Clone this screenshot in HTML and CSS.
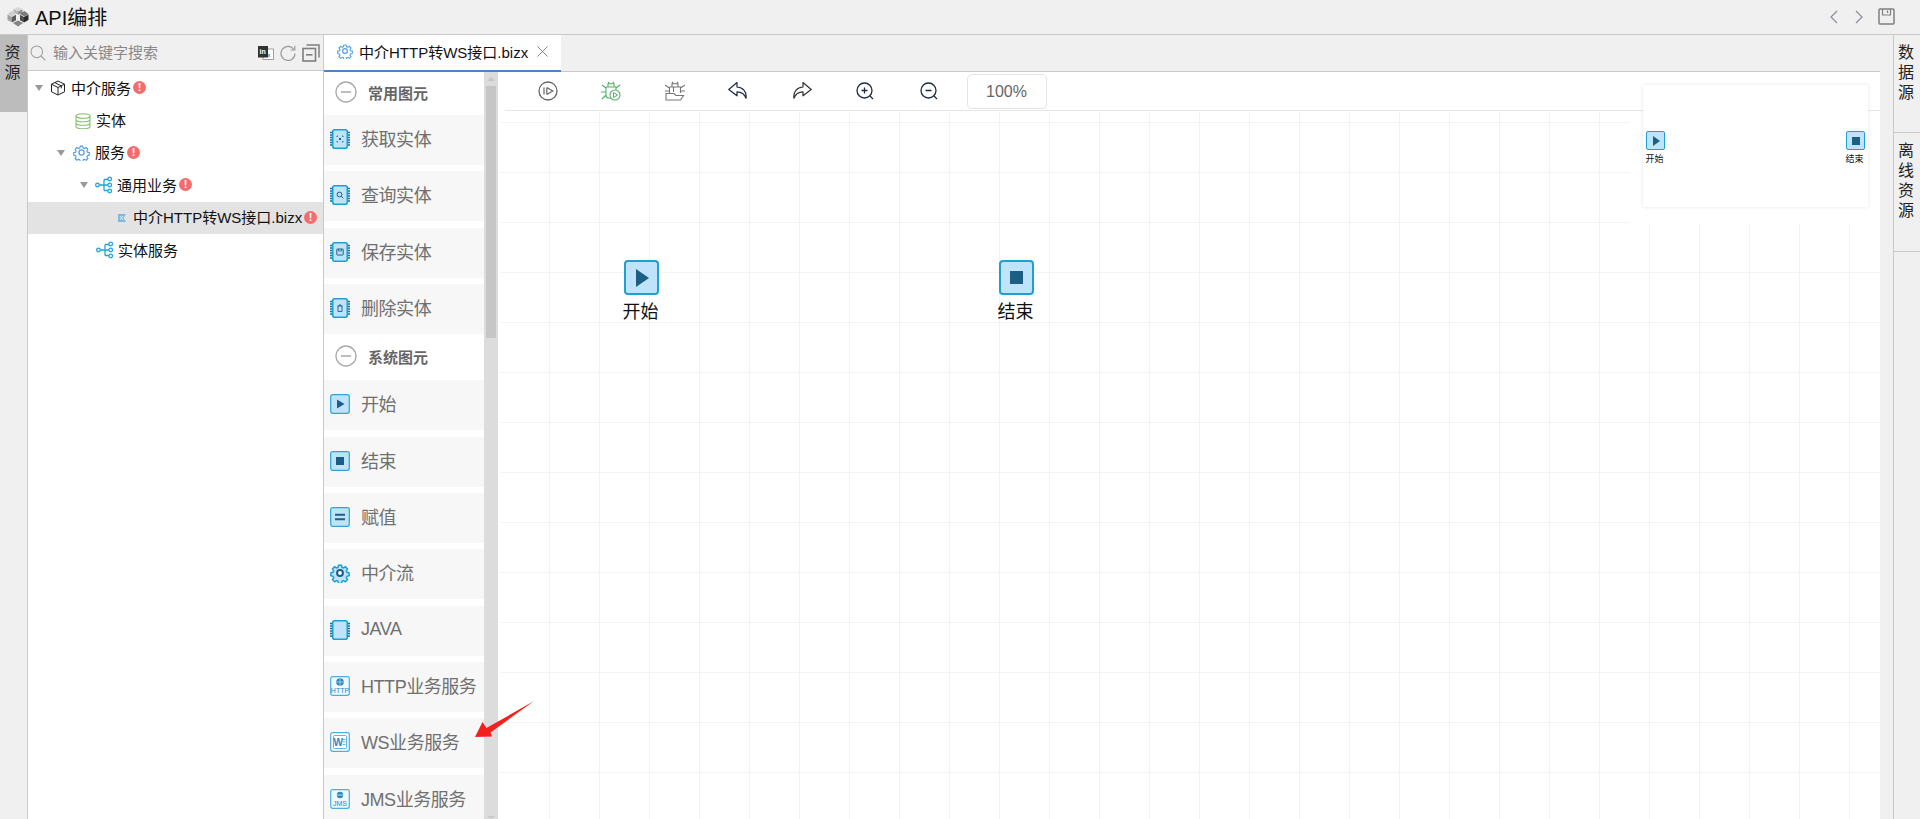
FILE: index.html
```html
<!DOCTYPE html>
<html lang="zh">
<head>
<meta charset="utf-8">
<title>API编排</title>
<link rel="stylesheet" href="styles.css">
</head>
<body>
<svg class="defs" width="0" height="0" aria-hidden="true">
  <defs>
    <symbol id="chip" viewBox="0 0 20 20">
      <path d="M0 3.500h3M0 6h3M0 8.500h3M0 11h3M0 13.500h3M0 16h3M17 3.500h3M17 6h3M17 8.500h3M17 11h3M17 13.500h3M17 16h3" stroke="#1b6f96" stroke-width="1.300" fill="none"/>
      <rect x="2.700" y=".8" width="14.600" height="18.400" rx="2" fill="#bfe3fa" stroke="#1aa0d2" stroke-width="1.600"/>
    </symbol>
    <symbol id="gear" viewBox="0 0 24 24">
      <path d="M10 2h4l.7 3 1.800.8 2.700-1.600 2.800 2.800-1.600 2.700.8 1.800 3 .7v4l-3 .7-.8 1.800 1.600 2.700-2.800 2.800-2.700-1.600-1.800.8-.7 3h-4l-.7-3-1.800-.8-2.700 1.600-2.800-2.800 1.600-2.700-.8-1.800-3-.7v-4l3-.7.8-1.800-1.600-2.700 2.800-2.800 2.700 1.600 1.800-.8z" transform="translate(1.200 1.200) scale(.9)" fill="none" stroke="currentColor" stroke-width="1.800" stroke-linejoin="round"/>
      <circle cx="12" cy="12" r="3.600" fill="none" stroke="currentColor" stroke-width="1.800"/>
    </symbol>
    <symbol id="flow" viewBox="0 0 18 18">
      <path d="M4 9h5M9 3.500v11M9 3.500h4M9 9h4M9 14.500h4" fill="none" stroke="#1fa5d8" stroke-width="1.300"/>
      <circle cx="2.500" cy="9" r="1.800" fill="#fff" stroke="#1fa5d8" stroke-width="1.300"/>
      <circle cx="14.700" cy="3" r="1.800" fill="#fff" stroke="#1fa5d8" stroke-width="1.300"/>
      <circle cx="14.700" cy="9" r="1.800" fill="#fff" stroke="#1fa5d8" stroke-width="1.300"/>
      <circle cx="14.700" cy="15" r="1.800" fill="#fff" stroke="#1fa5d8" stroke-width="1.300"/>
    </symbol>
    <symbol id="minus-circle" viewBox="0 0 22 22">
      <circle cx="11" cy="11" r="10" fill="#fff" stroke="#a8a8a8" stroke-width="1.300"/>
      <path d="M6 11h10" stroke="#a8a8a8" stroke-width="1.500"/>
    </symbol>
  </defs>
</svg>

<header class="topbar">
  <svg class="logo" viewBox="0 0 22 20">
    <path d="M11 0l4.500 2.300L11 4.600 6.500 2.300z" fill="#d8d8d8"/>
    <path d="M6.500 2.300L11 4.600v3.200L6.500 5.500z" fill="#b4b4b4"/>
    <path d="M15.500 2.300L11 4.600v3.200l4.500-2.300z" fill="#8f8f8f"/>
    <path d="M3.500 4l5 2.800L3.500 9.500-.5 7z" transform="translate(1 0)" fill="#cfcfcf"/>
    <path d="M18.500 4l4 3-4 2.500-5-2.700z" transform="translate(-1 0)" fill="#7a7a7a"/>
    <path d="M.5 7.500l4.500 2.500v5.500L.5 13z" fill="#a0a0a0"/>
    <path d="M5 10l4-2.200v5.500L5 15.500z" fill="#5c5c5c"/>
    <path d="M21.500 7.500L17 10v5.500l4.500-2.500z" fill="#2a2a2a"/>
    <path d="M13 7.800l4 2.200v5.500l-4-2.200z" fill="#4c4c4c"/>
    <path d="M6 16l5-2.500 5 2.500-5 3.600z" fill="#858585"/>
  </svg>
  <h1 class="title">API编排</h1>
  <div class="top-actions">
    <svg class="nav-icon" viewBox="0 0 10 14"><path d="M8 1L2 7l6 6" fill="none" stroke="#8a9099" stroke-width="1.200"/></svg>
    <svg class="nav-icon" viewBox="0 0 10 14"><path d="M2 1l6 6-6 6" fill="none" stroke="#8a9099" stroke-width="1.200"/></svg>
    <svg class="save-icon" viewBox="0 0 17 17"><path d="M1 2a1 1 0 0 1 1-1h13a1 1 0 0 1 1 1v13a1 1 0 0 1-1 1H2a1 1 0 0 1-1-1z" fill="none" stroke="#7f7f7f" stroke-width="1.500"/><path d="M4.500 1v6h8V1" fill="none" stroke="#7f7f7f" stroke-width="1.200"/><path d="M9.500 2.500v2.500" stroke="#7f7f7f" stroke-width="1.300"/></svg>
  </div>
</header>

<main class="workspace">
  <nav class="rail rail-left">
    <div class="rail-tab rail-tab-active">资<br>源</div>
  </nav>

  <aside class="resources">
    <div class="search">
      <svg class="search-icon" viewBox="0 0 16 16"><circle cx="6.800" cy="6.800" r="5.800" fill="none" stroke="#a0a0a0" stroke-width="1.100"/><path d="M11 11l4.300 4.300" stroke="#a0a0a0" stroke-width="1.100"/></svg>
      <span class="search-text">输入关键字搜索</span>
      <div class="search-actions">
        <svg class="tool-in" viewBox="0 0 16 16"><rect x="5" y="4" width="10.500" height="10.500" fill="#fff" stroke="#888" stroke-width=".8"/><rect x="0" y="1" width="10" height="11.500" fill="#333"/><text x="1.500" y="9" class="tool-in-text">in</text><text x="9.500" y="12" class="tool-in-text-dark">x</text></svg>
        <svg class="tool-refresh" viewBox="0 0 16 16"><path d="M13.800 4.500A7 7 0 1 0 15 8.500" fill="none" stroke="#999" stroke-width="1.200"/><path d="M14.800 .8v4.200h-4.200" fill="none" stroke="#999" stroke-width="1.200"/></svg>
        <svg class="tool-collapse" viewBox="0 0 18 18"><rect x="1" y="4.500" width="12.500" height="12.500" fill="none" stroke="#7f7f7f" stroke-width="1.600"/><path d="M4.500 1h12.500v12.500" fill="none" stroke="#7f7f7f" stroke-width="1.500"/><path d="M4 10.800h6.500" stroke="#7f7f7f" stroke-width="1.600"/></svg>
      </div>
    </div>
    <ul class="tree">
      <li class="row pad-0">
        <i class="caret"></i>
        <svg class="row-icon" viewBox="0 0 16 16"><path d="M8 1l6.500 3.200v7.600L8 15l-6.500-3.200V4.200zM1.500 4.200L8 7.500l6.500-3.300M8 7.500V15M4.800 2.600l6.500 3.300v2.500" fill="none" stroke="#222" stroke-width="1" stroke-linejoin="round"/></svg>
        <span class="row-text">中介服务</span><b class="badge">!</b>
      </li>
      <li class="row pad-1-leaf">
        <svg class="row-icon" viewBox="0 0 16 16"><ellipse cx="8" cy="3" rx="7" ry="2.300" fill="none" stroke="#85bf6d" stroke-width="1.100"/><path d="M1 3v10.500C1 14.800 4 15.800 8 15.800s7-1 7-2.300V3M1 6.500c0 1.300 3 2.300 7 2.300s7-1 7-2.300M1 10c0 1.300 3 2.300 7 2.300s7-1 7-2.300" fill="none" stroke="#85bf6d" stroke-width="1.100"/></svg>
        <span class="row-text">实体</span>
      </li>
      <li class="row pad-1">
        <i class="caret"></i>
        <svg class="row-icon-gear gear-blue"><use href="#gear"/></svg>
        <span class="row-text">服务</span><b class="badge">!</b>
      </li>
      <li class="row pad-2">
        <i class="caret"></i>
        <svg class="row-icon-wide"><use href="#flow"/></svg>
        <span class="row-text">通用业务</span><b class="badge">!</b>
      </li>
      <li class="row pad-3 row-selected">
        <svg class="file-icon" viewBox="0 0 8 8"><path d="M0 0h8L5.500 4 8 8H0z" fill="#7fb7e0"/><path d="M2 2l3 4M5 2L2 6" stroke="#fff" stroke-width=".7"/></svg>
        <span class="row-text">中介HTTP转WS接口.bizx</span><b class="badge">!</b>
      </li>
      <li class="row pad-2-leaf">
        <svg class="row-icon-wide"><use href="#flow"/></svg>
        <span class="row-text">实体服务</span>
      </li>
    </ul>
  </aside>

  <section class="editor">
    <div class="tabs">
      <div class="tab">
        <svg class="tab-icon gear-light"><use href="#gear"/></svg>
        <span class="tab-text">中介HTTP转WS接口.bizx</span>
        <svg class="tab-close" viewBox="0 0 11 11"><path d="M.5.500l10 10M10.500.500l-10 10" stroke="#777" stroke-width=".9"/></svg>
      </div>
    </div>
    <div class="editor-body">
      <div class="palette">
        <div class="palette-list">
          <div class="group group-first"><svg class="group-icon"><use href="#minus-circle"/></svg><span class="group-text">常用图元</span></div>
          <div class="item"><svg class="item-icon" viewBox="0 0 20 20"><use href="#chip"/><path d="M7 8V7h1M12 7h1v1M7 12v1h1M13 12v1h-1" fill="none" stroke="#1b5f83" stroke-width=".9"/><rect x="9" y="9" width="2" height="2" fill="#1b5f83"/></svg><span>获取实体</span></div>
          <div class="item"><svg class="item-icon" viewBox="0 0 20 20"><use href="#chip"/><circle cx="9.500" cy="9.500" r="2.400" fill="none" stroke="#1b5f83" stroke-width="1"/><path d="M11.300 11.300l2 2" stroke="#1b5f83" stroke-width="1"/></svg><span>查询实体</span></div>
          <div class="item"><svg class="item-icon" viewBox="0 0 20 20"><use href="#chip"/><rect x="6.800" y="7" width="6.400" height="6" rx=".6" fill="none" stroke="#1b5f83" stroke-width="1"/><path d="M8.500 7v2h3V7" fill="none" stroke="#1b5f83" stroke-width=".8"/></svg><span>保存实体</span></div>
          <div class="item"><svg class="item-icon" viewBox="0 0 20 20"><use href="#chip"/><path d="M7.500 8h5M9 8V7h2v1M8 8v5.500h4V8" fill="none" stroke="#1b5f83" stroke-width=".9"/></svg><span>删除实体</span></div>
          <div class="group"><svg class="group-icon"><use href="#minus-circle"/></svg><span class="group-text">系统图元</span></div>
          <div class="item"><svg class="item-icon" viewBox="0 0 20 20"><rect x=".7" y=".7" width="18.600" height="18.600" rx="2" fill="#bfe3fa" stroke="#2aa6d8" stroke-width="1.200"/><path d="M7 5.500L14.500 10 7 14.500z" fill="#1b5f83"/></svg><span>开始</span></div>
          <div class="item"><svg class="item-icon" viewBox="0 0 20 20"><rect x=".7" y=".7" width="18.600" height="18.600" rx="2" fill="#bfe3fa" stroke="#2aa6d8" stroke-width="1.200"/><rect x="6" y="6" width="8" height="8" fill="#1b5f83"/></svg><span>结束</span></div>
          <div class="item"><svg class="item-icon" viewBox="0 0 20 20"><rect x=".7" y=".7" width="18.600" height="18.600" rx="2" fill="#bfe3fa" stroke="#2aa6d8" stroke-width="1.200"/><path d="M5 6.800h10v2H5zM5 11.200h10v2H5z" fill="#1b5f83"/></svg><span>赋值</span></div>
          <div class="item"><svg class="item-icon" viewBox="0 0 24 24"><path d="M10 1.500h4l.7 3 1.800.8 2.700-1.600 2.800 2.800-1.600 2.700.8 1.800 3 .7v4l-3 .7-.8 1.800 1.600 2.700-2.800 2.800-2.700-1.600-1.800.8-.7 3h-4l-.7-3-1.800-.8-2.700 1.600-2.800-2.800 1.600-2.700-.8-1.800-3-.7v-4l3-.7.8-1.800-1.600-2.700 2.800-2.800 2.700 1.600 1.800-.8z" transform="translate(1.200 1.200) scale(.9)" fill="#bfe3fa" stroke="#1aa0d2" stroke-width="2"/><circle cx="12" cy="12" r="3.500" fill="#fff" stroke="#1b5f83" stroke-width="2.400"/></svg><span>中介流</span></div>
          <div class="item item-latin"><svg class="item-icon" viewBox="0 0 20 20"><use href="#chip"/></svg><span>JAVA</span></div>
          <div class="item"><svg class="item-icon" viewBox="0 0 20 20"><rect x=".7" y=".7" width="18.600" height="18.600" rx="2" fill="#eef8fe" stroke="#4aaee0" stroke-width="1.200"/><circle cx="10" cy="6" r="3.800" fill="#2e87bd"/><path d="M6.300 6h7.400M10 2.200v7.600" stroke="#d8eefc" stroke-width=".6"/><text x="10" y="16.500" class="svc-text">HTTP</text></svg><span>HTTP业务服务</span></div>
          <div class="item"><svg class="item-icon" viewBox="0 0 20 20"><rect x=".7" y=".7" width="18.600" height="18.600" rx="2" fill="#fff" stroke="#4aaee0" stroke-width="1.200"/><rect x="3.500" y="3.500" width="13" height="13" rx="1" fill="#fff" stroke="#4aaee0" stroke-width=".9"/><text x="8.300" y="13.500" class="svc-text-w">W</text><path d="M12.800 7.500h2.600M12.800 10h2.600M12.800 12.500h2.600" stroke="#4aaee0" stroke-width=".9"/></svg><span>WS业务服务</span></div>
          <div class="item"><svg class="item-icon" viewBox="0 0 20 20"><rect x=".7" y=".7" width="18.600" height="18.600" rx="2" fill="#eef8fe" stroke="#4aaee0" stroke-width="1.200"/><circle cx="10" cy="6" r="3.200" fill="#2e87bd"/><path d="M7 6h6" stroke="#d8eefc" stroke-width=".8"/><text x="10" y="16.500" class="svc-text">JMS</text></svg><span>JMS业务服务</span></div>
        </div>
        <div class="scrollbar">
          <i class="scroll-up"></i>
          <i class="scroll-thumb"></i>
          <i class="scroll-down"></i>
        </div>
      </div>

      <div class="canvas">
        <div class="toolbar">
          <button class="tool"><svg viewBox="0 0 20 20" class="tool-svg"><circle cx="10" cy="10" r="9" fill="none" stroke="#666" stroke-width="1.300"/><path d="M6 6.500v7M8.800 6.500v7M8.800 6.500l6 3.500-6 3.500" fill="none" stroke="#666" stroke-width="1.200"/></svg></button>
          <button class="tool"><svg viewBox="0 0 20 20" class="tool-svg"><path d="M7 .8l1.500 2h3L13 .8M5 6h10v3M5 6v8a3 3 0 0 0 3 3h2M1 4l4 3M19 4l-4 3M0 11h5M1 18l4-4M7 2.800h6V6H7z" fill="none" stroke="#54b06a" stroke-width="1.100"/><circle cx="14" cy="14" r="5" fill="#fff" stroke="#54b06a" stroke-width="1.100"/><path d="M12.500 11.500l4 2.500-4 2.500z" fill="none" stroke="#54b06a" stroke-width="1"/></svg></button>
          <button class="tool"><svg viewBox="0 0 20 20" class="tool-svg"><path d="M7 .8l1.500 2h3L13 .8M4.500 6h11v6M4.500 6v6M0 4l4.500 3M20 4l-4.500 3M0 10h4.500M20 10h-4.500M7 2.800h6V6H7zM8.500 6v5" fill="none" stroke="#777" stroke-width="1.100"/><path d="M1 12.500h8l2 2h7.500l-3 4.500H1z" fill="#fff" stroke="#777" stroke-width="1.100"/></svg></button>
          <button class="tool"><svg viewBox="0 0 20 20" class="tool-svg"><path d="M9 1.500L.8 8.500l8.200 6.300v-4c4.500 0 7.500 2 9 6.500 1-6.500-3-11-9-11.300z" fill="none" stroke="#1e2a44" stroke-width="1.200" stroke-linejoin="round"/></svg></button>
          <button class="tool"><svg viewBox="0 0 20 20" class="tool-svg"><path d="M11 1.500l8.200 7-8.200 6.300v-4c-4.500 0-7.500 2-9 6.500-1-6.500 3-11 9-11.300z" fill="none" stroke="#333" stroke-width="1.200" stroke-linejoin="round"/></svg></button>
          <button class="tool"><svg viewBox="0 0 20 20" class="tool-svg"><circle cx="9.500" cy="9.500" r="7.500" fill="none" stroke="#1e2a44" stroke-width="1.300"/><path d="M15 15l3 3M6.500 9.500h6M9.500 6.500v6" fill="none" stroke="#1e2a44" stroke-width="1.300"/></svg></button>
          <button class="tool"><svg viewBox="0 0 20 20" class="tool-svg"><circle cx="9.500" cy="9.500" r="7.500" fill="none" stroke="#1e2a44" stroke-width="1.300"/><path d="M15 15l3 3M6.500 9.500h6" fill="none" stroke="#1e2a44" stroke-width="1.300"/></svg></button>
          <div class="zoom-box">100%</div>
        </div>
        <div class="stage">
          <div class="node node-start">
            <div class="node-box"><i class="glyph-play"></i></div>
            <span class="node-label">开始</span>
          </div>
          <div class="node node-end">
            <div class="node-box"><i class="glyph-stop"></i></div>
            <span class="node-label">结束</span>
          </div>
        </div>
        <div class="overview-mask"></div>
        <div class="overview">
          <div class="mini mini-start"><div class="mini-box"><i class="mini-play"></i></div><span class="mini-label">开始</span></div>
          <div class="mini mini-end"><div class="mini-box"><i class="mini-stop"></i></div><span class="mini-label">结束</span></div>
        </div>
      </div>
    </div>
  </section>

  <div class="gutter"></div>

  <nav class="rail rail-right">
    <div class="rail-tab rail-tab-data">数<br>据<br>源</div>
    <div class="rail-tab rail-tab-offline">离<br>线<br>资<br>源</div>
  </nav>

  <svg class="annotation" viewBox="0 0 62 38"><path d="M1 37L8.500 22l4 6L60 1 16.500 32.500 18 36.500z" fill="#f4201c"/></svg>
</main>
</body>
</html>
```
FILE: styles.css
```css
* { box-sizing: border-box; }
html, body { margin: 0; height: 819px; overflow: hidden; }
body {
  font-family: "Liberation Sans", "Noto Sans CJK SC", sans-serif;
  background: #f0f0f0;
  color: #111;
  display: flex;
  flex-direction: column;
}
.defs { position: absolute; }
i { display: block; }

.topbar {
  height: 35px;
  flex: none;
  display: flex;
  align-items: center;
  padding: 0 25px 1px 7px;
  border-bottom: 1px solid #c9c9c9;
}
.logo { width: 22px; height: 20px; }
.title { margin: 0 0 0 6px; font-size: 20px; font-weight: 400; color: #111; }
.top-actions { margin-left: auto; display: flex; align-items: center; gap: 15px; }
.nav-icon { width: 10px; height: 14px; }
.save-icon { width: 17px; height: 17px; margin-left: -1px; }

.workspace { flex: 1; display: flex; min-height: 0; position: relative; }

.rail { flex: none; background: #f0f0f0; }
.rail-left { width: 28px; border-right: 1px solid #c9c9c9; }
.rail-right { width: 27px; border-left: 1px solid #c9c9c9; }
.rail-tab { font-size: 16px; line-height: 20px; text-align: center; color: #222; }
.rail-tab-active { height: 77px; width: 27px; background: #bcbcbc; padding: 8px 2px 0 0; }
.rail-tab-data { height: 98px; padding: 8px 2px 0 0; border-bottom: 1px solid #c9c9c9; }
.rail-tab-offline { height: 119px; padding: 8px 2px 0 0; border-bottom: 1px solid #c9c9c9; }

.resources { width: 296px; flex: none; background: #fff; border-right: 1px solid #c9c9c9; }
.search {
  height: 36px;
  display: flex;
  align-items: center;
  padding-left: 2px;
  background: #f0f0f0;
  border-bottom: 1px solid #c9c9c9;
}
.search-icon { width: 16px; height: 16px; }
.search-text { margin: 0 0 2px 7px; font-size: 15px; color: #888; }
.search-actions { margin-left: auto; display: flex; align-items: center; gap: 6px; padding-right: 3px; }
.tool-in { width: 16px; height: 16px; }
.tool-in-text { font: bold 7px "Liberation Sans", sans-serif; fill: #fff; }
.tool-in-text-dark { font: 6px "Liberation Sans", sans-serif; fill: #333; }
.tool-refresh { width: 16px; height: 16px; }
.tool-collapse { width: 18px; height: 18px; }

.tree { list-style: none; margin: 0; padding: 1px 0 0; }
.row { height: 32.4px; display: flex; align-items: center; font-size: 15px; color: #111; }
.row-text { margin-bottom: 2px; white-space: nowrap; }
.row-selected { background: #e3e3e3; }
.pad-0 { padding-left: 7px; }
.pad-1 { padding-left: 29px; }
.pad-1-leaf { padding-left: 47px; }
.pad-2 { padding-left: 52px; }
.pad-2-leaf { padding-left: 68px; }
.pad-3 { padding-left: 90px; }
.caret {
  width: 0; height: 0;
  margin-right: 7px;
  border-left: 4.500px solid transparent;
  border-right: 4.500px solid transparent;
  border-top: 6px solid #999;
}
.row-icon { width: 16px; height: 16px; margin-right: 5px; }
.row-icon-gear { width: 17px; height: 17px; margin: 0 5px 0 1px; }
.row-icon-wide { width: 18px; height: 18px; margin-right: 4px; }
.gear-blue { color: #4d9fe8; }
.gear-light { color: #4d9fe8; }
.file-icon { width: 8px; height: 8px; margin-right: 7px; }
.badge {
  width: 13px; height: 13px;
  margin: 0 0 1px 2px;
  border-radius: 50%;
  background: #f56c6c;
  color: #fff;
  font-size: 11px;
  line-height: 13px;
  text-align: center;
}

.editor { flex: 1; min-width: 0; display: flex; flex-direction: column; }
.tabs { height: 37px; flex: none; border-bottom: 1px solid #c9c9c9; display: flex; }
.tab {
  width: 237px;
  height: 37px;
  display: flex;
  align-items: center;
  padding: 0 0 3px 13px;
  background: #fff;
  border-bottom: 2px solid #4a86cc;
}
.tab-icon { width: 16px; height: 16px; }
.tab-text { margin-left: 6px; font-size: 15px; color: #111; white-space: nowrap; }
.tab-close { width: 11px; height: 11px; margin-left: 9px; }

.editor-body { flex: 1; min-height: 0; display: flex; background: #fff; }
.palette { width: 174px; flex: none; display: flex; overflow: hidden; }
.palette-list { width: 160px; flex: none; background: #fff; }
.group { height: 40px; display: flex; align-items: center; padding: 0 0 8px 11px; }
.group-first { height: 43px; padding-bottom: 3px; }
.group-icon { width: 22px; height: 22px; }
.group-text { margin-left: 11px; font-size: 15px; font-weight: 700; color: #666; }
.item {
  height: 50px;
  margin-bottom: 6.330px;
  display: flex;
  align-items: center;
  padding: 0 0 2px 6px;
  background: #f7f7f7;
  font-size: 18px;
  letter-spacing: -.45px;
  color: #707070;
  white-space: nowrap;
}
.item span { margin-bottom: 2px; }
.item-latin span { margin-bottom: 0; }
.item-icon { width: 20px; height: 20px; margin-right: 11px; flex: none; }
.svc-text { font: 7px "Liberation Sans", sans-serif; fill: #2e87bd; text-anchor: middle; letter-spacing: 0; }
.svc-text-w { font: bold 10px "Liberation Sans", sans-serif; fill: #2e87bd; text-anchor: middle; letter-spacing: 0; }

.scrollbar { width: 14px; flex: none; background: #dcdcdc; position: relative; }
.scroll-up {
  position: absolute; top: 5px; left: 3px;
  width: 0; height: 0;
  border-left: 4px solid transparent;
  border-right: 4px solid transparent;
  border-bottom: 4px solid #c8c8c8;
}
.scroll-down {
  position: absolute; bottom: 0; left: 3px;
  width: 0; height: 0;
  border-left: 4px solid transparent;
  border-right: 4px solid transparent;
  border-top: 3px solid #c8c8c8;
}
.scroll-thumb { position: absolute; top: 14px; left: 2px; width: 10px; height: 252px; background: #c6c6c6; }

.canvas { flex: 1; min-width: 0; margin-left: 2px; display: flex; flex-direction: column; position: relative; }
.toolbar {
  height: 39px;
  flex: none;
  margin-left: 5px;
  display: flex;
  align-items: center;
  padding: 0 0 0 11px;
  border-bottom: 1px solid #e6e6e6;
}
.tool {
  width: 63.500px;
  height: 24px;
  padding: 0;
  border: 0;
  background: none;
  display: flex;
  align-items: center;
  justify-content: center;
}
.tool-svg { width: 20px; height: 20px; }
.zoom-box {
  width: 80px;
  height: 35px;
  margin-left: 6px;
  border: 1px solid #e4e4e4;
  border-radius: 5px;
  font-size: 16px;
  line-height: 33px;
  text-align: center;
  color: #666;
}
.stage {
  flex: 1;
  position: relative;
  overflow: hidden;
  background-color: #fff;
  background-image:
    linear-gradient(to right, transparent 49px, #f3f3f3 49px),
    linear-gradient(to bottom, transparent 49px, #f3f3f3 49px);
  background-size: 50px 50px;
  background-position: 0 0, 0 -38px;
}
.node { position: absolute; width: 35px; display: flex; flex-direction: column; align-items: center; }
.node-start { left: 124px; top: 149px; }
.node-end { left: 499px; top: 149px; }
.node-box {
  width: 35px; height: 35px;
  border: 2px solid #1ea0d0;
  border-radius: 4px;
  background: #bfe3fa;
  display: flex;
  align-items: center;
  justify-content: center;
}
.node-label { margin: 5px 2px 0 0; font-size: 18px; line-height: 24px; color: #111; white-space: nowrap; }
.glyph-play {
  width: 0; height: 0;
  margin-left: 2px;
  border-top: 9px solid transparent;
  border-bottom: 9px solid transparent;
  border-left: 13px solid #1b5f83;
}
.glyph-stop { width: 13px; height: 13px; background: #1b5f83; }

.overview-mask {
  position: absolute;
  top: 39px; right: 0;
  width: 250px;
  height: 112px;
  background: #fff;
}
.overview {
  position: absolute;
  top: 13px; right: 12px;
  width: 225px;
  height: 122px;
  background: #fff;
  box-shadow: 0 0 4px rgba(0, 0, 0, .1);
}
.mini { position: absolute; top: 46px; display: flex; flex-direction: column; align-items: center; width: 19px; }
.mini-start { left: 3px; }
.mini-end { left: 203px; }
.mini-box {
  width: 19px; height: 19px;
  border: 1px solid #1ea0d0;
  border-radius: 2px;
  background: #bfe3fa;
  display: flex;
  align-items: center;
  justify-content: center;
}
.mini-label { margin: 2px 2px 0 0; font-size: 9px; line-height: 14px; color: #111; white-space: nowrap; }
.mini-play {
  width: 0; height: 0;
  margin-left: 1px;
  border-top: 5px solid transparent;
  border-bottom: 5px solid transparent;
  border-left: 7px solid #1b5f83;
}
.mini-stop { width: 8px; height: 8px; background: #1b5f83; }

.gutter { width: 13px; flex: none; background: #f0f0f0; }

.annotation { position: absolute; left: 473px; top: 665px; width: 64px; height: 38px; }
```
